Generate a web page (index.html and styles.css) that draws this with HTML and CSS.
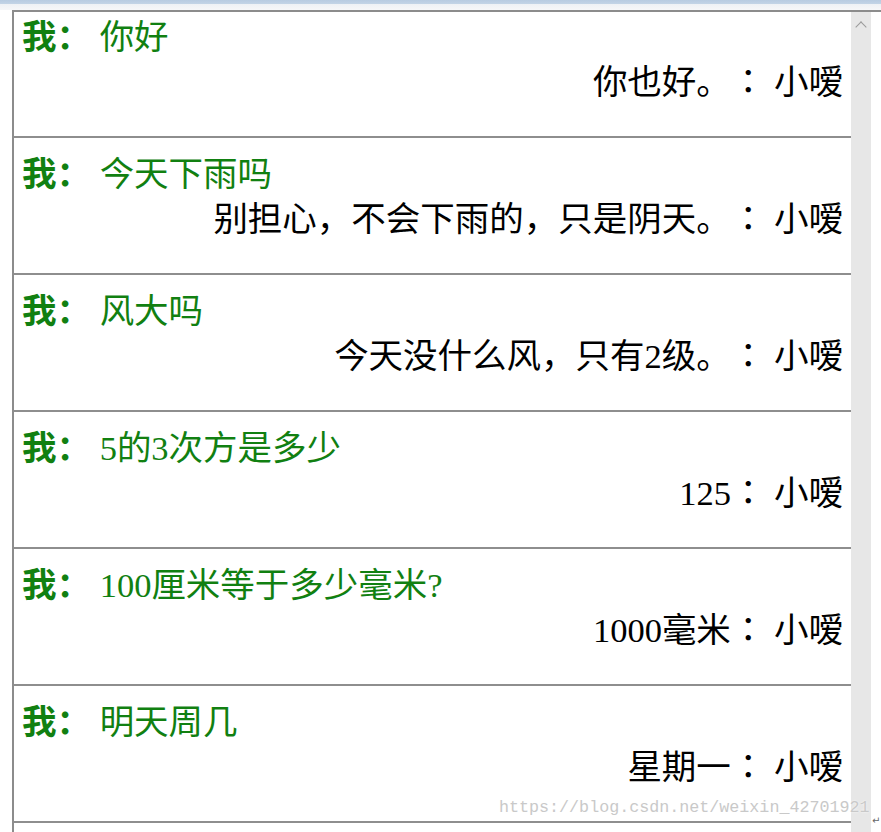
FILE: index.html
```html
<!DOCTYPE html>
<html lang="zh">
<head>
<meta charset="utf-8">
<title>小嗳</title>
<link rel="stylesheet" href="styles.css">
</head>
<body>
<div class="topbar"></div>
<div class="window">
  <div class="list">
    <div class="row first">
      <div class="me"><b class="who">我：</b> 你好</div>
      <div class="bot">你也好。<span class="colon" lang="ja">：</span> 小嗳</div>
    </div>
    <div class="row">
      <div class="me"><b class="who">我：</b> 今天下雨吗</div>
      <div class="bot">别担心，不会下雨的，只是阴天。<span class="colon" lang="ja">：</span> 小嗳</div>
    </div>
    <div class="row">
      <div class="me"><b class="who">我：</b> 风大吗</div>
      <div class="bot">今天没什么风，只有2级。<span class="colon" lang="ja">：</span> 小嗳</div>
    </div>
    <div class="row">
      <div class="me"><b class="who">我：</b> 5的3次方是多少</div>
      <div class="bot">125<span class="colon" lang="ja">：</span> 小嗳</div>
    </div>
    <div class="row">
      <div class="me"><b class="who">我：</b> 100厘米等于多少毫米?</div>
      <div class="bot">1000毫米<span class="colon" lang="ja">：</span> 小嗳</div>
    </div>
    <div class="row">
      <div class="me"><b class="who">我：</b> 明天周几</div>
      <div class="bot">星期一<span class="colon" lang="ja">：</span> 小嗳</div>
    </div>
  </div>
  <div class="scrollbar"><span class="arrow"></span></div>
  <div class="margin-col"><span class="para">↵</span></div>
  <div class="watermark">https://blog.csdn.net/weixin_42701921</div>
</div>
</body>
</html>
```

FILE: styles.css
```css
html, body {
  margin: 0;
  padding: 0;
  background: #ffffff;
  height: 832px;
  overflow: hidden;
}

.topbar {
  height: 10px;
  background: linear-gradient(to bottom, #b7cbe1 0, #c3d4e6 4px, #eef1f5 4px, #f6f7f9 10px);
}

.window {
  position: relative;
  display: flex;
  margin-left: 12px;
  height: 822px;
  border-top: 2px solid #8c8c8c;
}

.list {
  width: 837px;
  border-left: 2px solid #8c8c8c;
  overflow: hidden;
  font-family: "Liberation Serif", "Noto Sans CJK SC", serif;
  font-size: 34.5px;
  line-height: 45px;
  text-spacing-trim: space-all;
}

.row {
  padding: 14px 8px 31px 8px;
  border-bottom: 2px solid #8e8e8e;
}

.row.first {
  margin-top: -11px;
}

.me {
  color: #118011;
  white-space: nowrap;
}

.who {
  font-weight: bold;
}

.bot {
  color: #000000;
  text-align: right;
  white-space: nowrap;
}

.colon {
  font-family: "Noto Sans CJK JP", "Noto Sans CJK SC", sans-serif;
  line-height: 0;
}

.scrollbar {
  width: 20px;
  background: #e7e7e7;
  display: flex;
  justify-content: center;
  padding-top: 7px;
  box-sizing: border-box;
}

.arrow {
  width: 7px;
  height: 7px;
  border-left: 1.5px solid #9a9a9a;
  border-top: 1.5px solid #9a9a9a;
  transform: rotate(45deg);
  margin-top: 4px;
}

.margin-col {
  flex: 1;
  position: relative;
}

.para {
  position: absolute;
  left: 1px;
  top: 803px;
  font-family: "DejaVu Sans", sans-serif;
  font-size: 10px;
  color: #666;
}

.watermark {
  position: absolute;
  left: 487px;
  top: 786px;
  font-family: "Liberation Mono", monospace;
  font-size: 16.7px;
  color: #c9c9c9;
  text-shadow: 0 0 2px #ffffff;
  white-space: nowrap;
}
```
